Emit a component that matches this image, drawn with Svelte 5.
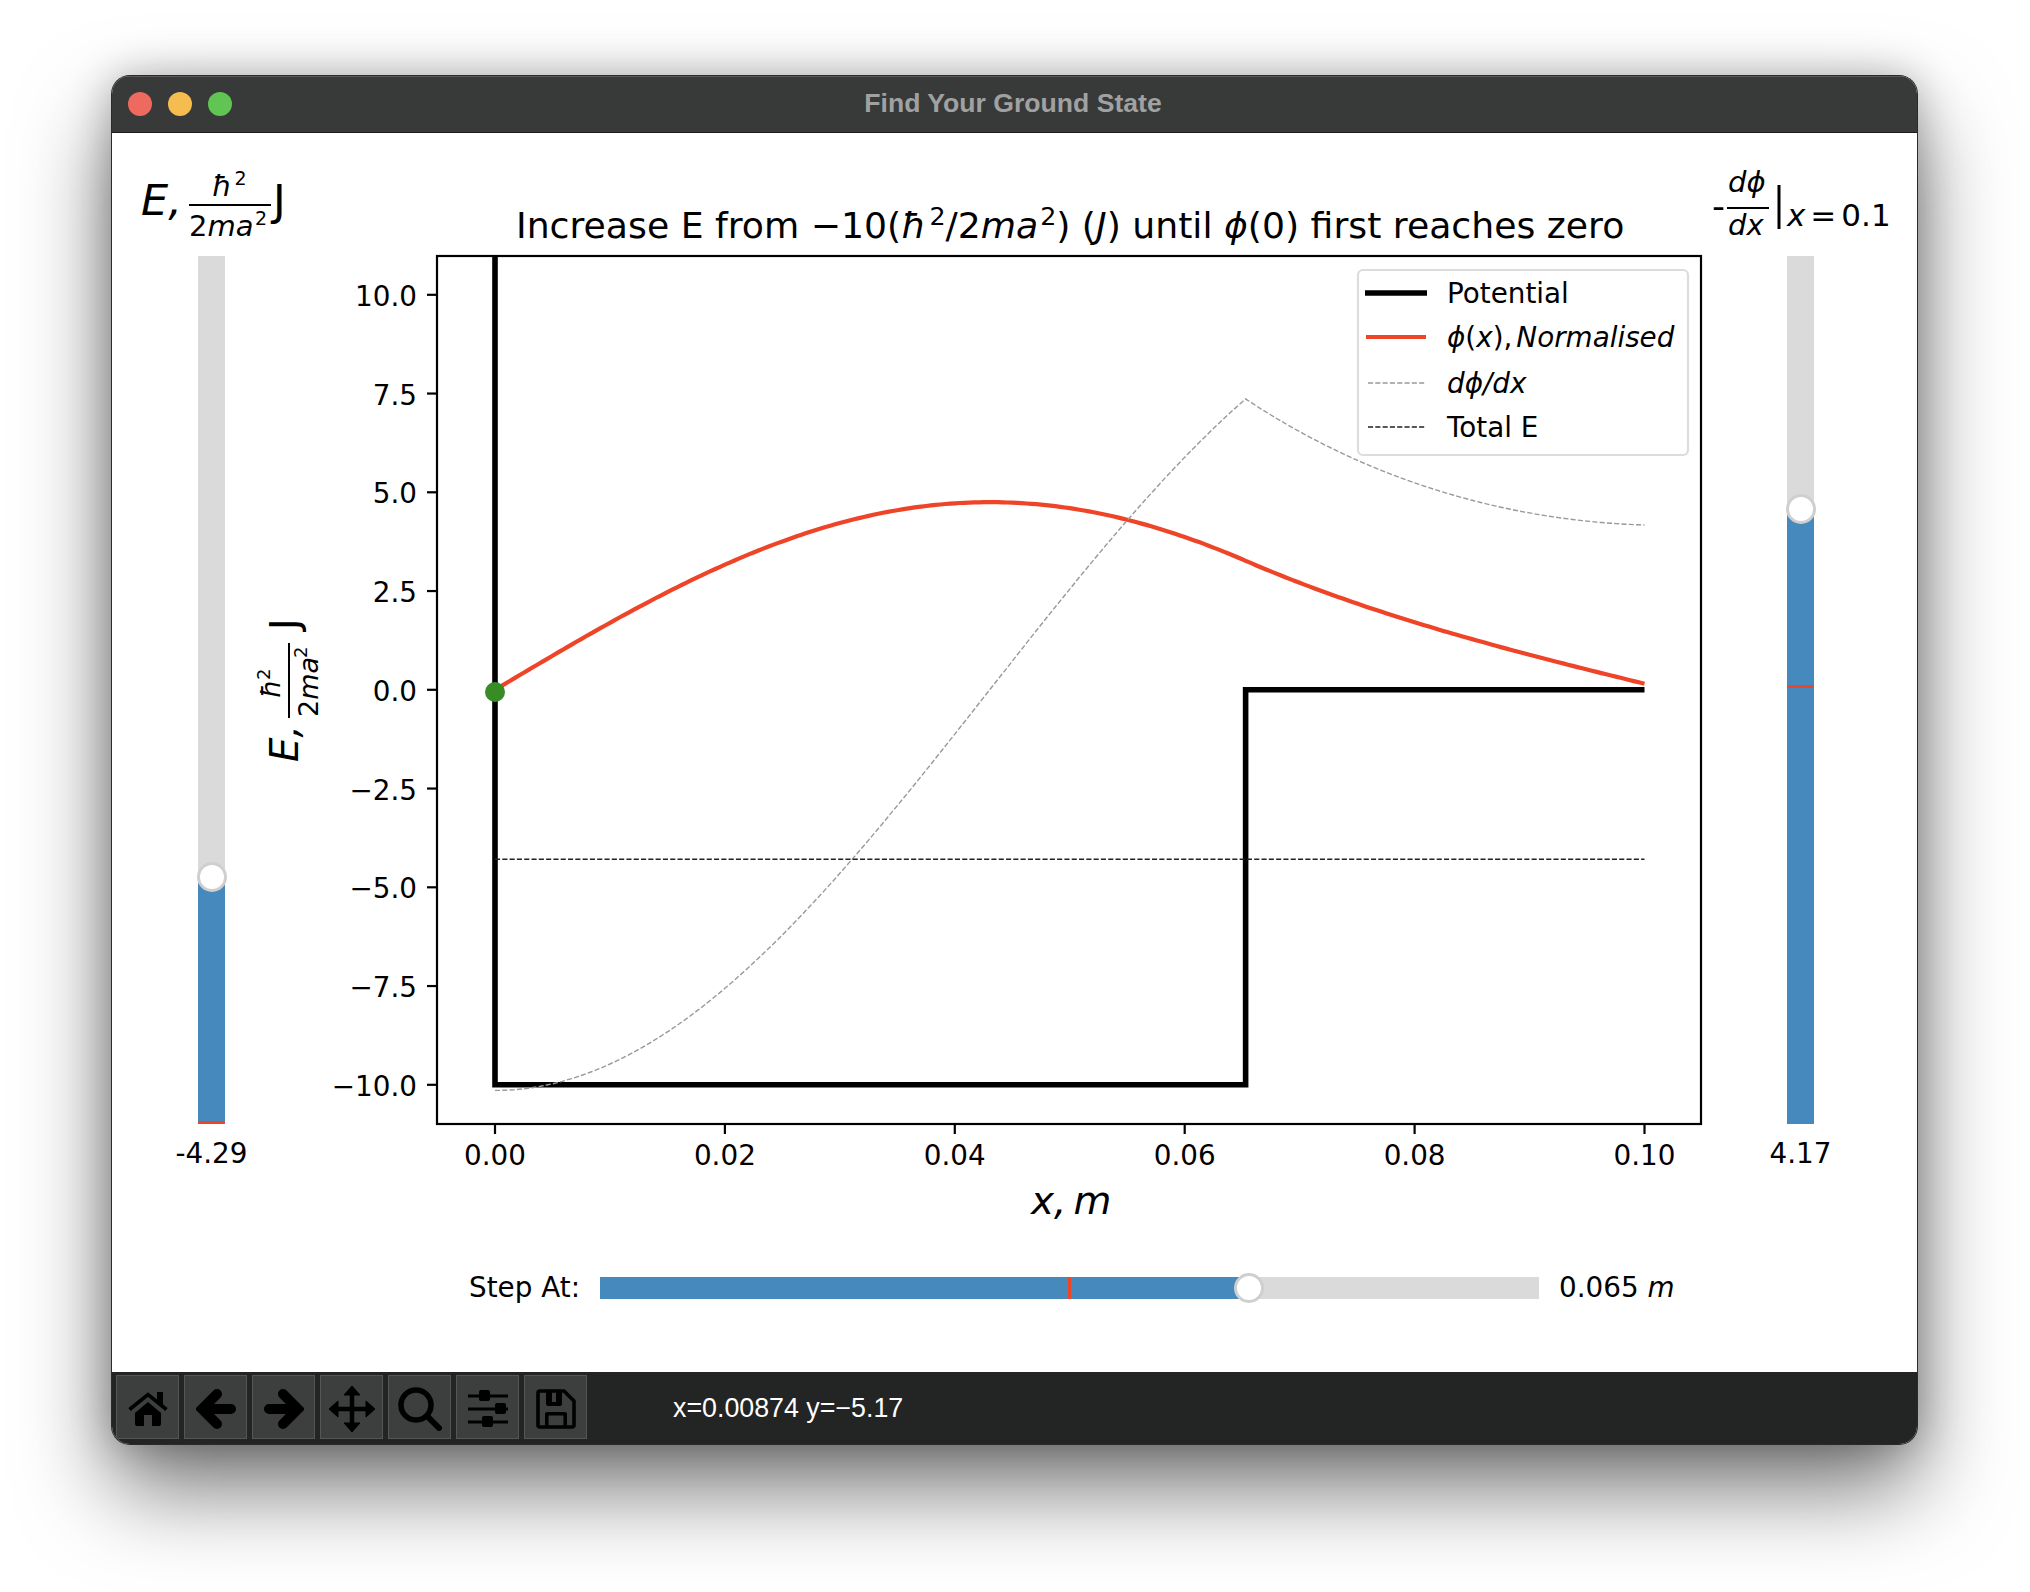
<script>
  // plot scale, figure pixels
  const px = (x) => 495 + x * 11495;
  const py = (y) => 689.8 - y * 39.5;

  const stepAt = 0.0653;
  const energy = -4.29;
  const k = 36.5;
  const kappa = 31.8;
  const amp = 4.75;
  const slopeScale = 0.0585;

  function phi(x) {
    if (x <= stepAt) return amp * Math.sin(k * x);
    const s = x - stepAt;
    const p0 = amp * Math.sin(k * stepAt);
    const d0 = amp * k * Math.cos(k * stepAt);
    return p0 * Math.cosh(kappa * s) + (d0 / kappa) * Math.sinh(kappa * s);
  }

  function dphi(x) {
    if (x <= stepAt) return -amp * k * Math.cos(k * x) * slopeScale;
    const s = x - stepAt;
    const p0 = amp * Math.sin(k * stepAt);
    const d0 = amp * k * Math.cos(k * stepAt);
    return -(p0 * kappa * Math.sinh(kappa * s) + d0 * Math.cosh(kappa * s)) * slopeScale;
  }

  function curve(fn) {
    const xs = [];
    for (let i = 0; i <= 240; i++) xs.push(i / 2400);
    xs.push(stepAt);
    xs.sort((a, b) => a - b);
    return xs.map((x) => `${px(x).toFixed(1)},${py(fn(x)).toFixed(1)}`).join(' ');
  }

  const potential = `${px(0)},256 ${px(0)},${py(-10)} ${px(stepAt)},${py(-10)} ${px(stepAt)},${py(0)} ${px(0.1)},${py(0)}`;
  const yTicks = [10, 7.5, 5, 2.5, 0, -2.5, -5, -7.5, -10];
  const xTicks = [0, 0.02, 0.04, 0.06, 0.08, 0.1];

  const yLabel = (v) => (v < 0 ? '\u2212' : '') + Math.abs(v).toFixed(1);
</script>

{#snippet vtrack(value, fill, mark)}
  <div class="vtrack">
    <div class="vfill" style="height: {fill}%"></div>
    <div class="vmark" style="bottom: {mark}%"></div>
    <div class="knob" style="bottom: {fill}%; left: 50%; transform: translate(-50%, 50%)"></div>
  </div>
  <div class="value">{value}</div>
{/snippet}

<div class="window">
  <header class="titlebar">
    <div class="lights">
      <span class="light red"></span>
      <span class="light yellow"></span>
      <span class="light green"></span>
    </div>
    <span class="title">Find Your Ground State</span>
  </header>

  <main class="figure">
    <div class="vslider">
      <svg class="label" width="198" height="123" viewBox="112 133 198 123">
        <text class="math i" x="140" y="215" font-size="43">E,</text>
        <text class="math i" x="211" y="196" font-size="29">ħ</text>
        <text class="math" x="233.500" y="185" font-size="19">2</text>
        <line x1="188" x2="270" y1="205" y2="205" stroke="#000" stroke-width="2" />
        <text class="math" x="188" y="236" font-size="29">2<tspan class="i">ma</tspan></text>
        <text class="math" x="254" y="225" font-size="19">2</text>
        <text class="math" x="272" y="215" font-size="43">J</text>
      </svg>
      {@render vtrack('-4.29', 28.5, 0)}
    </div>

    <svg class="plot" width="1430" height="1107" viewBox="310 133 1430 1107">
      <text class="math" x="516" y="238" font-size="36.2">Increase E from −10(<tspan class="i">ħ</tspan><tspan dx="3" dy="-13" font-size="25.3">2</tspan><tspan dy="13">/2</tspan><tspan class="i">ma</tspan><tspan dx="2" dy="-13" font-size="25.3">2</tspan><tspan dy="13">) (</tspan><tspan class="i">J</tspan>) until <tspan class="i">ϕ</tspan>(0) first reaches zero</text>

      <polyline points={potential} fill="none" stroke="#000" stroke-width="5.6" stroke-linejoin="miter" />
      <polyline points={curve(phi)} fill="none" stroke="#ee4528" stroke-width="4.2" />
      <polyline points={curve(dphi)} fill="none" stroke="#999" stroke-width="1.4" stroke-dasharray="5.1 2.2" />
      <line x1={px(0)} x2={px(0.1)} y1={py(energy)} y2={py(energy)} stroke="#222" stroke-width="1.4" stroke-dasharray="5.1 2.2" />
      <circle cx="495" cy="692" r="10" fill="#388c26" />

      <rect x="437" y="256" width="1264" height="868" fill="none" stroke="#000" stroke-width="2.2" />

      {#each yTicks as t}
        <line x1="427" x2="437" y1={py(t)} y2={py(t)} stroke="#000" stroke-width="2.2" />
        <text class="math" x="417" y={py(t) + 11.1} text-anchor="end" font-size="27.8">{yLabel(t)}</text>
      {/each}
      {#each xTicks as t}
        <line x1={px(t)} x2={px(t)} y1="1124" y2="1134" stroke="#000" stroke-width="2.2" />
        <text class="math" x={px(t)} y="1165" text-anchor="middle" font-size="27.8">{t.toFixed(2)}</text>
      {/each}

      <text class="math i" x="1031" y="1214" font-size="38.9">x,<tspan dx="7">m</tspan></text>

      <g transform="translate(298 762) rotate(-90)">
        <text class="math i" x="0" y="0" font-size="38.9">E,</text>
        <text class="math i" x="64" y="-18" font-size="27">ħ</text>
        <text class="math" x="82" y="-28" font-size="18">2</text>
        <line x1="44" x2="119" y1="-9" y2="-9" stroke="#000" stroke-width="2" />
        <text class="math" x="45" y="20" font-size="27">2<tspan class="i">ma</tspan></text>
        <text class="math" x="104" y="9" font-size="18">2</text>
        <text class="math" x="132" y="0" font-size="38.9">J</text>
      </g>

      <g class="legend">
        <rect x="1358" y="270" width="330" height="185" rx="5" fill="#fff" fill-opacity="0.8" stroke="#dcdcdc" stroke-width="2.2" />
        <line x1="1365" x2="1427" y1="293" y2="293" stroke="#000" stroke-width="5.6" />
        <line x1="1366" x2="1426" y1="337" y2="337" stroke="#ee4528" stroke-width="4.2" />
        <line x1="1368" x2="1425" y1="383" y2="383" stroke="#999" stroke-width="1.4" stroke-dasharray="5.1 2.2" />
        <line x1="1368" x2="1425" y1="427" y2="427" stroke="#222" stroke-width="1.4" stroke-dasharray="5.1 2.2" />
        <text class="math" x="1447" y="303" font-size="27.8">Potential</text>
        <text class="math" x="1447" y="347" font-size="27.8"><tspan class="i">ϕ</tspan>(<tspan class="i">x</tspan>),<tspan class="i" dx="4">Normalised</tspan></text>
        <text class="math i" x="1447" y="393" font-size="27.8">dϕ/dx</text>
        <text class="math" x="1447" y="437" font-size="27.8">Total E</text>
      </g>
    </svg>

    <div class="vslider">
      <svg class="label" width="120" height="123" viewBox="1740 133 120 123">
        <text class="math" x="1711" y="218" font-size="36">-</text>
        <text class="math i" x="1727" y="192" font-size="29">dϕ</text>
        <line x1="1726" x2="1768" y1="208" y2="208" stroke="#000" stroke-width="2" />
        <text class="math i" x="1727" y="235" font-size="29">dx</text>
        <line x1="1778" x2="1778" y1="185" y2="229" stroke="#000" stroke-width="3" />
        <text class="math" x="1786" y="226" font-size="31"><tspan class="i">x</tspan><tspan dx="5">=</tspan><tspan dx="5">0.1</tspan></text>
      </svg>
      {@render vtrack('4.17', 70.85, 50.2)}
    </div>

    <div class="hslider">
      <span class="step-label">Step At:</span>
      <div class="htrack">
        <div class="hfill" style="width: 69.15%"></div>
        <div class="hmark" style="left: 49.8%"></div>
        <div class="knob" style="left: 69.15%; top: 50%; transform: translate(-50%, -50%)"></div>
      </div>
      <span class="step-value">0.065 <i>m</i></span>
    </div>
  </main>

  <footer class="toolbar">
    <div class="tool">
      <svg width="42" height="36" viewBox="0 0 42 36">
        <path d="M2.5 18.5 21 3.5l18.5 15" fill="none" stroke="#000" stroke-width="3.6" />
        <rect x="30" y="1" width="6" height="12" />
        <path d="M8 22 21 11l13 11v11a2 2 0 0 1-2 2h-7V24h-8v11h-7a2 2 0 0 1-2-2z" />
      </svg>
    </div>
    <div class="tool">
      <svg width="40" height="42" viewBox="-1 0 40 42">
        <path d="M34 21H8M20 6 5 21l15 15" fill="none" stroke="#000" stroke-width="10" stroke-linecap="round" />
      </svg>
    </div>
    <div class="tool">
      <svg width="40" height="42" viewBox="1 0 40 42">
        <path d="M6 21h26M20 6l15 15-15 15" fill="none" stroke="#000" stroke-width="10" stroke-linecap="round" />
      </svg>
    </div>
    <div class="tool">
      <svg width="46" height="46" viewBox="0 0 46 46">
        <path d="M23 6v34M6 23h34" stroke="#000" stroke-width="4.5" />
        <path d="M23 0l8 9H15zM23 46l-8-9h16zM0 23l9-8v16zM46 23l-9 8V15z" stroke="#000" stroke-width="1" stroke-linejoin="round" />
      </svg>
    </div>
    <div class="tool">
      <svg width="44" height="44" viewBox="0 0 44 44">
        <circle cx="18" cy="18" r="15" fill="none" stroke="#000" stroke-width="5.5" />
        <path d="M29 29l12 12" stroke="#000" stroke-width="6" stroke-linecap="round" />
      </svg>
    </div>
    <div class="tool">
      <svg width="40" height="38" viewBox="0 0 40 38">
        <path d="M0 6h40M0 19h40M0 32h40" stroke="#000" stroke-width="3" />
        <rect x="11" y="0" width="11" height="11" rx="2" />
        <rect x="27" y="13" width="11" height="11" rx="2" />
        <rect x="14" y="26" width="11" height="11" rx="2" />
      </svg>
    </div>
    <div class="tool">
      <svg width="40" height="40" viewBox="0 0 40 40">
        <path d="M4 2h24l10 10v24a2 2 0 0 1-2 2H4a2 2 0 0 1-2-2V4a2 2 0 0 1 2-2z" fill="none" stroke="#000" stroke-width="3.6" stroke-linejoin="round" />
        <path d="M10 3v12a2 2 0 0 0 2 2h12a2 2 0 0 0 2-2V3h-6v10h-4V3z" />
        <path d="M9 37V25a2 2 0 0 1 2-2h18a2 2 0 0 1 2 2v12h-3.6V26.500H12.600V37z" />
      </svg>
    </div>
    <span class="coords">x=0.00874 y=−5.17</span>
  </footer>
</div>

<style>
  :global(body) {
    background: #fff;
    height: 1592px;
    overflow: hidden;
  }

  .window {
    width: 1805px;
    height: 1368px;
    margin: 76px 0 0 112px;
    display: flex;
    flex-direction: column;
    background: #fff;
    border-radius: 18px;
    overflow: hidden;
    box-shadow:
      0 0 0 1px #2a2a2a,
      0 44px 90px rgba(0, 0, 0, 0.55),
      0 0 40px rgba(0, 0, 0, 0.25);
  }

  .titlebar {
    height: 57px;
    flex-shrink: 0;
    display: flex;
    align-items: center;
    justify-content: center;
    position: relative;
    background: #383939;
    border-bottom: 1px solid #1c1c1c;
    box-sizing: border-box;
    box-shadow: inset 0 1px 0 #5a5a5a;
  }

  .lights {
    position: absolute;
    left: 16px;
    top: 16px;
    display: flex;
    gap: 16px;
  }

  .light {
    width: 24px;
    height: 24px;
    border-radius: 50%;
  }

  .red { background: #ee6a5f; }
  .yellow { background: #f5bd4f; }
  .green { background: #61c554; }

  .title {
    font: 700 26.6px/30px "Liberation Sans", sans-serif;
    color: #a0a1a1;
    margin: -2px 0 0 -3px;
  }

  .figure {
    flex: 1;
    display: grid;
    grid-template-columns: 198px 1430px 120px;
    grid-template-rows: 1107px 132px;
  }

  .vslider {
    display: flex;
    flex-direction: column;
    align-items: center;
    padding-left: 1px;
  }

  .label {
    flex-shrink: 0;
    overflow: visible;
  }

  .plot {
    overflow: visible;
  }

  .math {
    font-family: "DejaVu Sans", sans-serif;
    fill: #000;
  }

  .i {
    font-style: italic;
  }

  .vtrack {
    width: 27px;
    height: 868px;
    flex-shrink: 0;
    position: relative;
    background: #dadada;
  }

  .vfill {
    position: absolute;
    left: 0;
    right: 0;
    bottom: 0;
    background: #4689bd;
  }

  .vmark {
    position: absolute;
    left: 0;
    right: 0;
    height: 3px;
    background: #ee4528;
  }

  .knob {
    position: absolute;
    width: 30px;
    height: 30px;
    box-sizing: border-box;
    border-radius: 50%;
    background: #fff;
    border: 3px solid #cfcfcf;
  }

  .value {
    margin-top: 13px;
    font: 27.8px/34px "DejaVu Sans", sans-serif;
    color: #000;
  }

  .hslider {
    grid-column: 1 / -1;
    display: flex;
    align-items: center;
    gap: 20px;
    height: 96px;
  }

  .step-label {
    width: 468px;
    text-align: right;
    font: 27.8px/34px "DejaVu Sans", sans-serif;
  }

  .step-value {
    font: 27.8px/34px "DejaVu Sans", sans-serif;
    white-space: nowrap;
  }

  .htrack {
    width: 939px;
    height: 22px;
    flex-shrink: 0;
    position: relative;
    background: #dadada;
  }

  .hfill {
    position: absolute;
    left: 0;
    top: 0;
    bottom: 0;
    background: #4689bd;
  }

  .hmark {
    position: absolute;
    top: 0;
    bottom: 0;
    width: 3px;
    background: #ee4528;
  }

  .toolbar {
    height: 72px;
    flex-shrink: 0;
    box-sizing: border-box;
    padding: 3px 0 0 4px;
    display: flex;
    align-items: flex-start;
    gap: 5px;
    background: #232424;
  }

  .tool {
    width: 63px;
    height: 64px;
    box-sizing: border-box;
    padding-top: 4px;
    display: flex;
    align-items: center;
    justify-content: center;
    background: #3d3f3e;
    border: 1px solid #555;
  }

  .coords {
    margin-left: 81px;
    font: 26.8px/66px "Liberation Sans", sans-serif;
    color: #fff;
  }
</style>
